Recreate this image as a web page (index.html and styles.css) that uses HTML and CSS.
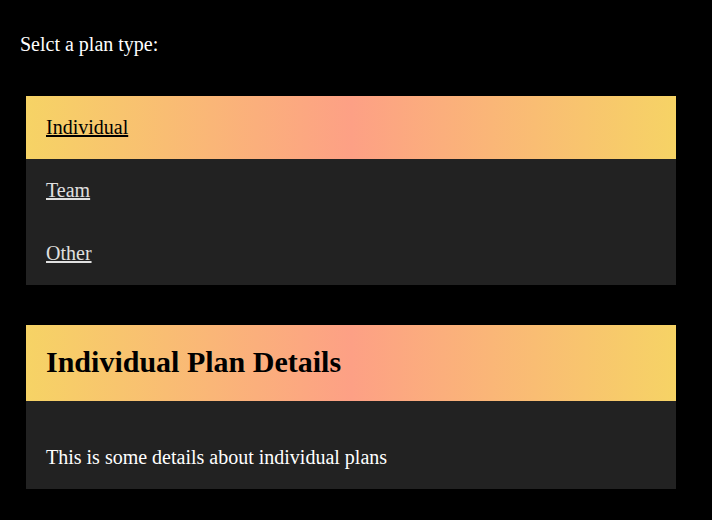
FILE: index.html
```html
<!DOCTYPE html>
<html>
<head>
<meta charset="utf-8">
<link rel="stylesheet" href="styles.css">
</head>
<body>
<div class="page">
  <p class="prompt">Selct a plan type:</p>
  <ul class="plans">
    <li class="plan active"><a href="#">Individual</a></li>
    <li class="plan"><a href="#">Team</a></li>
    <li class="plan"><a href="#">Other</a></li>
  </ul>
  <section class="details">
    <h2 class="details-title">Individual Plan Details</h2>
    <div class="details-body">
      <p>This is some details about individual plans</p>
    </div>
  </section>
</div>
</body>
</html>
```

FILE: styles.css
```css
html, body {
  margin: 0;
  padding: 0;
  background: #000;
}
body {
  font-family: "Liberation Serif", "Times New Roman", serif;
  font-size: 20px;
  color: #fff;
}
.page {
  padding: 33px 36px 0 20px;
}
.prompt {
  margin: 0 0 40px;
  line-height: 23px;
}
.plans {
  list-style: none;
  margin: 0 0 40px 6px;
  padding: 0;
  width: 650px;
  background: #222;
}
.plan {
  padding: 20px;
  line-height: 23px;
}
.plan a {
  color: #e0e0e0;
}
.plan.active {
  background: linear-gradient(90deg, #f6d365, #fda085, #f6d365);
}
.plan.active a {
  color: #000;
}
.details {
  margin-left: 6px;
  width: 650px;
  background: #222;
}
.details-title {
  margin: 0;
  padding: 20px 20px 22px;
  font-size: 30px;
  color: #000;
  background: linear-gradient(90deg, #f6d365, #fda085, #f6d365);
}
.details-body {
  padding: 25px 20px 0;
  overflow: hidden;
}
.details-body p {
  margin: 20px 0;
  line-height: 23px;
}
```
